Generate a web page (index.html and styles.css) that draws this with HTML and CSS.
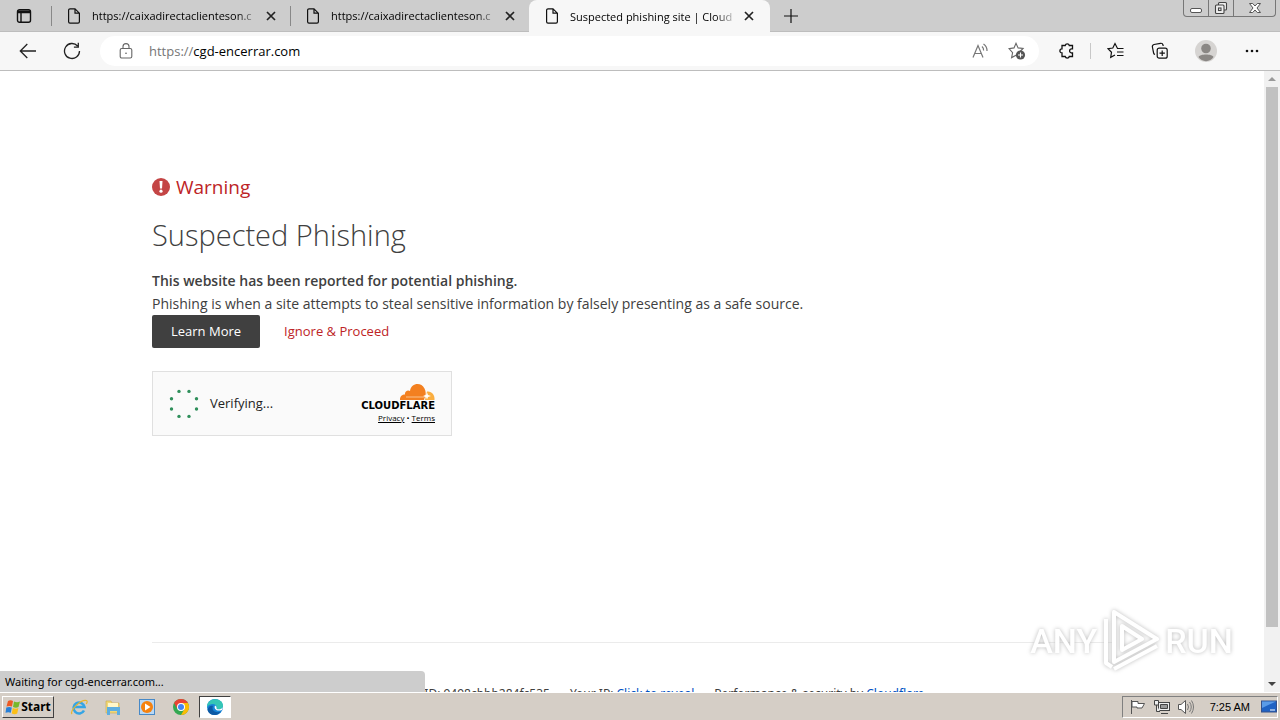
FILE: index.html
```html
<!DOCTYPE html>
<html lang="en">
<head>
    <meta charset="UTF-8">
    <meta name="viewport" content="width=device-width, initial-scale=1.0">
    <title>Suspected phishing site | Cloudflare</title>
    <link rel="stylesheet" href="styles.css">
</head>
<body>
    <div class="tab-strip">
        <button class="tab-menu" aria-label="Tab actions">
            <svg width="16" height="16" viewBox="0 0 16 16" fill="none" stroke="#111" stroke-width="1.4"><rect x="1.5" y="1.7" width="13" height="12.6" rx="2"/><path d="M2 3.3h12M2 4.6h12M5 5v9"/></svg>
        </button>
        <div class="tab">
            <svg width="14" height="16" viewBox="0 0 14 16" fill="none" stroke="#111" stroke-width="1.2"><path d="M3 .8h5l4.4 4.4v8.6a1.4 1.4 0 0 1-1.4 1.4H3a1.4 1.4 0 0 1-1.4-1.4V2.2A1.4 1.4 0 0 1 3 .8zM8 .8v4.4h4.4"/></svg>
            <span class="tab-title">https://caixadirectaclienteson.c</span>
            <button class="tab-close" aria-label="Close tab"><svg width="10" height="10" viewBox="0 0 10 10" stroke="#222" stroke-width="1.7"><path d="M1 1l8 8M9 1l-8 8"/></svg></button>
        </div>
        <div class="tab">
            <svg width="14" height="16" viewBox="0 0 14 16" fill="none" stroke="#111" stroke-width="1.2"><path d="M3 .8h5l4.4 4.4v8.6a1.4 1.4 0 0 1-1.4 1.4H3a1.4 1.4 0 0 1-1.4-1.4V2.2A1.4 1.4 0 0 1 3 .8zM8 .8v4.4h4.4"/></svg>
            <span class="tab-title">https://caixadirectaclienteson.c</span>
            <button class="tab-close" aria-label="Close tab"><svg width="10" height="10" viewBox="0 0 10 10" stroke="#222" stroke-width="1.7"><path d="M1 1l8 8M9 1l-8 8"/></svg></button>
        </div>
        <div class="tab active">
            <svg width="14" height="16" viewBox="0 0 14 16" fill="none" stroke="#111" stroke-width="1.2"><path d="M3 .8h5l4.4 4.4v8.6a1.4 1.4 0 0 1-1.4 1.4H3a1.4 1.4 0 0 1-1.4-1.4V2.2A1.4 1.4 0 0 1 3 .8zM8 .8v4.4h4.4"/></svg>
            <span class="tab-title">Suspected phishing site | Cloud</span>
            <button class="tab-close" aria-label="Close tab"><svg width="10" height="10" viewBox="0 0 10 10" stroke="#222" stroke-width="1.7"><path d="M1 1l8 8M9 1l-8 8"/></svg></button>
        </div>
        <button class="new-tab" aria-label="New tab"><svg width="14" height="14" viewBox="0 0 14 14" stroke="#111" stroke-width="1.2"><path d="M7 0v14M0 7h14"/></svg></button>
        <div class="window-buttons">
            <button aria-label="Minimize"><svg width="14" height="12" viewBox="0 0 14 12" fill="#fff" stroke="#555"><rect x="1.5" y="6.5" width="11" height="4" rx="1.5"/></svg></button>
            <button aria-label="Restore"><svg width="14" height="14" viewBox="0 0 14 14" fill="#eee" stroke="#444" stroke-width="1.1"><rect x="4.5" y="1.5" width="8" height="7.5" rx="1"/><rect x="1.5" y="4" width="8.5" height="8.5" rx="1"/><rect x="4.5" y="7" width="2.5" height="2.5"/></svg></button>
            <button class="close" aria-label="Close"><svg width="14" height="12" viewBox="0 0 14 12" fill="#fff" stroke="#555"><path d="M1.5 1.5h3.2L7 4l2.3-2.5h3.2L9 6l3.5 4.5H9.3L7 8l-2.3 2.5H1.5L5 6z"/></svg></button>
        </div>
    </div>

    <div class="toolbar">
        <button class="nav-button" aria-label="Back"><svg width="18" height="16" viewBox="0 0 18 16" fill="none" stroke="#222" stroke-width="1.3"><path d="M17 8H1.5M8.3 1L1.3 8l7 7"/></svg></button>
        <button class="nav-button" aria-label="Refresh"><svg width="18" height="18" viewBox="0 0 18 18" fill="none" stroke="#222" stroke-width="1.3"><path d="M16.5 9A7.5 7.5 0 1 1 14.6 4M15.3.8v4.4h-4.4"/></svg></button>
        <div class="address-bar">
            <svg width="14" height="16" viewBox="0 0 14 16" fill="none" stroke="#666" stroke-width="1.1"><rect x="1.2" y="5.5" width="11.6" height="9.5" rx="1.6"/><path d="M4 5.5V3.6a3 3 0 0 1 6 0v1.9"/><circle cx="7" cy="10.2" r=".8" fill="#555" stroke="none"/></svg>
            <div class="url"><span class="scheme">https://</span>cgd-encerrar.com</div>
            <button aria-label="Read aloud"><svg width="17" height="16" viewBox="0 0 17 16" fill="none" stroke="#777" stroke-width="1.2"><path d="M1 14.5l5-12 5 12M2.8 10.5h6.4M10 3.5a5 5 0 0 1 1.6 4M11.5 1a8 8 0 0 1 3.5 7"/></svg></button>
            <button aria-label="Add to favorites"><svg width="18" height="18" viewBox="0 0 18 18" fill="none" stroke="#666" stroke-width="1.1"><path d="M8.5 13l-4.9 2.6 1-5L1 6.6l5-.7L8 1.3l2.1 4.6 5 .6-3 3"/><circle cx="12.5" cy="13" r="4.6" fill="#555" stroke="none"/><path d="M12.5 10.5v5M10 13h5" stroke="#fff"/></svg></button>
        </div>
        <div class="actions">
            <button aria-label="Extensions"><svg width="18" height="18" viewBox="0 0 18 18" fill="none" stroke="#111" stroke-width="1.3"><path d="M4 3.5h3.2a2.1 2.1 0 0 1 4.1 0h3.2v3.3h-.8a2.1 2.1 0 0 0 0 4.2h.8v3.5h-3.2a2.1 2.1 0 0 1-4.1 0H4V11a2.1 2.1 0 0 1 0-4.2z"/></svg></button>
            <span class="divider"></span>
            <button class="favorites" aria-label="Favorites"><svg width="18" height="18" viewBox="0 0 18 18" fill="none" stroke="#111" stroke-width="1.2"><path d="M16.5 6.5h-6L8 1.5 5.8 6 1 6.7l3.5 3.6-.8 5L8 13M10 10h6.5M10 13.5h6.5"/></svg></button>
            <button aria-label="Collections"><svg width="18" height="18" viewBox="0 0 18 18" fill="none" stroke="#111" stroke-width="1.2"><rect x="6.2" y="6.2" width="10" height="10" rx="2"/><path d="M11.2 8.5v5.4M8.5 11.2h5.4M4 12.5A2 2 0 0 1 2.6 11L1.4 5A2.2 2.2 0 0 1 3 2.5l6.500-1.2A2.2 2.2 0 0 1 12 3l.2 1"/></svg></button>
            <button aria-label="Profile"><svg width="22" height="22" viewBox="0 0 22 22"><circle cx="11" cy="11" r="11" fill="#d6d4d2"/><circle cx="11" cy="8.5" r="4.8" fill="#8a8784"/><path d="M3.5 17c1-3.5 14-3.5 15 0-3 5.5-12 5.5-15 0z" fill="#8a8784"/></svg></button>
            <button aria-label="Settings and more"><svg width="14" height="4" viewBox="0 0 14 4" fill="#111"><circle cx="2" cy="2" r="1.3"/><circle cx="7" cy="2" r="1.3"/><circle cx="12" cy="2" r="1.3"/></svg></button>
        </div>
    </div>

    <div class="viewport">
        <div class="page">
            <main class="wrapper">
                <h2 class="warning">
                    <svg width="18" height="18" viewBox="0 0 18 18"><circle cx="9" cy="9" r="9" fill="#c44545"/><path d="M7.5 3h3l-.5 7.5H8z" fill="#fff"/><circle cx="9" cy="13.2" r="1.6" fill="#fff"/></svg>
                    Warning
                </h2>
                <h1>Suspected Phishing</h1>
                <p><strong>This website has been reported for potential phishing.</strong></p>
                <p>Phishing is when a site attempts to steal sensitive information by falsely presenting as a safe source.</p>
                <div class="choices">
                    <button class="learn-more">Learn More</button>
                    <button class="proceed">Ignore &amp; Proceed</button>
                </div>
                <div class="turnstile">
                    <svg width="30" height="30" viewBox="0 0 30 30" fill="#2f8f5b"><circle cx="10" cy="2.4" r="1.7"/><circle cx="20" cy="2.4" r="1.7"/><circle cx="27.5" cy="9.8" r="1.7"/><circle cx="27.5" cy="20" r="1.7"/><circle cx="20" cy="27.4" r="1.7"/><circle cx="10" cy="27.4" r="1.7"/><circle cx="2.5" cy="20" r="1.7"/><circle cx="2.5" cy="9.8" r="1.7"/></svg>
                    <span class="verifying">Verifying...</span>
                    <div class="brand">
                        <svg width="36" height="16" viewBox="0 0 36 16"><path d="M1 16c-.2-3.5 2-5.5 5-5.5C5.5 7 9 5.5 11 7 12-1 22-2.5 25.5 4.5c1 2 1.5 4 1 6.5L25 16z" fill="#f38020"/><path d="M26 16l2-8.5c4.5-.8 8 3.5 7.5 8.5z" fill="#faae40"/><path d="M7 13h18l1.5-2" fill="none" stroke="#fbd2a6" stroke-width=".8"/><path d="M28 8.5l1 2.5 3 1-3 1-1 2.5-1-2.5-3-1 3-1z" fill="#fff"/></svg>
                        <b class="brand-name">CLOUDFLARE</b>
                        <div class="legal"><a href="#">Privacy</a> • <a href="#">Terms</a></div>
                    </div>
                </div>
            </main>
            <footer class="wrapper footer">
                <span>Cloudflare Ray ID: 9498cbbb284fc535</span>
                <span>Your IP: <a href="#">Click to reveal</a></span>
                <span>Performance &amp; security by <a href="#">Cloudflare</a></span>
            </footer>
        </div>
        <div class="scrollbar">
            <span class="arrow up"></span>
            <span class="thumb"></span>
            <span class="arrow down"></span>
        </div>
        <div class="status">Waiting for cgd-encerrar.com...</div>
        <div class="watermark">
            <span>ANY</span>
            <svg width="58" height="64" viewBox="0 0 58 64" fill="none" stroke="#fff" stroke-width="4" stroke-linejoin="round"><path d="M4 10v44l6 4M12 3v50l43-23zM20 17v24l20-11zM12 60l43-23"/></svg>
            <span>RUN</span>
        </div>
    </div>

    <div class="taskbar">
        <button class="start">
            <svg width="16" height="16" viewBox="0 0 16 16"><path d="M3 2q2.5-1.5 5 0L7 7.5q-2.5-1.2-5.5 0z" fill="#ed5a24"/><path d="M9 2.5q3 1.5 6 0L13.5 8Q11 9.5 8 8z" fill="#77b82a"/><path d="M1.3 8.5q3-1.2 5.5 0l-1 5.3q-2.5-1.3-5.3 0z" fill="#2780d8"/><path d="M7.8 9q3 1.5 5.6 0l-1.2 5.5q-2.5 1.5-5.4 0z" fill="#fbbf16"/></svg>
            Start
        </button>
        <div class="launchers">
            <button aria-label="Internet Explorer"><svg width="18" height="18" viewBox="0 0 18 18" fill="none"><path d="M14 12.5A5.5 5.5 0 1 1 14.5 9H5" stroke="#35a5e5" stroke-width="2.6"/><path d="M2 16c-3-3 9-15 14.5-13.5 1 .3.8 2-.2 3.5" stroke="#e8b52c" stroke-width="1.2"/></svg></button>
            <button aria-label="Explorer"><svg width="18" height="18" viewBox="0 0 18 18"><path d="M2 3h5l1 2h7v10H2z" fill="#f0d778" stroke="#c9a94a" stroke-width=".6"/><path d="M4 5h10v4H4z" fill="#fff7c9"/><path d="M3 9h13v8h-3v-4H6v4H3z" fill="#5daee0"/></svg></button>
            <button aria-label="Media Player"><svg width="18" height="18" viewBox="0 0 18 18"><rect x="1.5" y="1.5" width="15" height="15" fill="#b9d8f5" stroke="#4789c7"/><circle cx="9" cy="9" r="6" fill="#f58210"/><path d="M7 5.5L12.5 9 7 12.5z" fill="#fff"/></svg></button>
            <button aria-label="Chrome"><svg width="18" height="18" viewBox="0 0 18 18"><circle cx="9" cy="9" r="8" fill="#33a852"/><path d="M2.07 5A8 8 0 0 1 15.93 5H9L5.5 11z" fill="#ea4335"/><path d="M15.93 5A8 8 0 0 1 9 17l3.5-6L9 5z" fill="#fbbc05"/><circle cx="9" cy="9" r="4" fill="#fff"/><circle cx="9" cy="9" r="3" fill="#4285f4"/></svg></button>
            <button class="running" aria-label="Edge"><svg width="18" height="18" viewBox="0 0 18 18"><circle cx="9" cy="9" r="8" fill="#1684d8"/><path d="M1 9C1-1 17-1 17 8c0 3-4 4.5-6.5 2.5C12 6 5 4 1 9z" fill="#35c6b6"/><path d="M7 8c-2 4 2 8 8 5.5C11 19 3 18 1.5 12 2.5 8 5 7 7 8z" fill="#0c59a4"/><path d="M9 7.5c-1.5 3 1.5 6.5 7 4.5l1-3c-1.5 2.5-5 3-6.5 1.5C11 9 10 7.8 9 7.5z" fill="#fff"/></svg></button>
        </div>
        <div class="tray">
            <svg width="18" height="16" viewBox="0 0 18 16" fill="#fff" stroke="#555"><path d="M2.5 1v14M3 2.5h6v2h6.5L13 9H8V8H3z"/></svg>
            <svg width="18" height="16" viewBox="0 0 18 16" fill="#eee" stroke="#444"><rect x="5.5" y="3.5" width="11" height="8"/><path d="M7.5 5.5h7v4h-7z" fill="#999"/><path d="M8 14.5h7M1.5 1.5h4V6h-4zM3.5 6v6.5H7"/></svg>
            <svg width="18" height="16" viewBox="0 0 18 16" fill="#fff" stroke="#555"><path d="M1.5 5.5H4L8.5 1.5v13L4 10.5H1.5z"/><path d="M10.5 5q2 3 0 6M12.5 3q3.5 5 0 10M14.5 1.5q4 6.5 0 13" fill="none" stroke="#777"/></svg>
            <span class="clock">7:25 AM</span>
            <svg width="16" height="14" viewBox="0 0 16 14"><rect x=".5" y="1" width="15" height="11" fill="#1f62c4" stroke="#35508a"/><path d="M1 1.5h14L1 8z" fill="#5a9be8"/><path d="M9 10h5" stroke="#fff"/></svg>
        </div>
    </div>
</body>
</html>
```
FILE: styles.css
```css
* {
    box-sizing: border-box;
}
body {
    margin: 0;
    height: 100vh;
    display: flex;
    flex-direction: column;
    overflow: hidden;
    font-family: "Open Sans", "Noto Sans", sans-serif;
    font-size: 13px;
    color: #000;
    background: #fff;
}
button {
    font: inherit;
    color: inherit;
    padding: 0;
    border: 0;
    background: none;
    display: flex;
    align-items: center;
    justify-content: center;
}
svg {
    flex: none;
    display: block;
}

/* tabs */
.tab-strip {
    display: flex;
    height: 32px;
    background: #cdcdcd;
    border-bottom: 1px solid #bdbdbd;
    font-size: 11px;
}
.tab-menu {
    width: 48px;
}
.tab {
    display: flex;
    align-items: center;
    width: 239px;
    padding: 0 11px 0 16px;
    margin-left: 3px;
    position: relative;
}
.tab + .tab {
    margin-left: 0;
}
.tab:not(.active)::before {
    content: "";
    position: absolute;
    left: 0;
    top: 6px;
    height: 20px;
    border-left: 1px solid #888;
}
.tab.active {
    width: 241px;
    height: 32px;
    padding-right: 13px;
    background: #f7f7f7;
    border-radius: 8px 8px 0 0;
}
.tab-title {
    flex: 1;
    margin: 0 6px 0 11px;
    white-space: nowrap;
    -webkit-mask-image: linear-gradient(to right, #000 88%, transparent 102%);
    mask-image: linear-gradient(to right, #000 88%, transparent 102%);
}
.tab-close {
    width: 16px;
    height: 20px;
}
.new-tab {
    width: 42px;
}
.window-buttons {
    display: flex;
    height: 17px;
    margin-left: auto;
    margin-right: 4px;
    border: 1px solid #777;
    border-top: 0;
    border-radius: 0 0 4px 4px;
}
.window-buttons button {
    width: 25px;
    border-right: 1px solid #777;
}
.window-buttons .close {
    width: 41px;
    border-right: 0;
}

/* toolbar */
.toolbar {
    display: flex;
    align-items: center;
    height: 39px;
    padding-left: 6px;
    background: #f7f7f7;
    border-bottom: 1px solid #bdbdbd;
}
.nav-button {
    width: 44px;
    height: 32px;
}
.address-bar {
    flex: 1;
    display: flex;
    align-items: center;
    height: 30px;
    margin-left: 6px;
    padding: 0 13px 0 19px;
    gap: 19px;
    border-radius: 15px;
    background: #fff;
}
.url {
    flex: 1;
    margin-left: -3px;
}
.scheme {
    color: #767676;
}
.actions {
    display: flex;
    align-items: center;
    margin-left: 5px;
    padding-right: 5px;
}
.actions button {
    width: 46px;
    height: 32px;
}
.actions .favorites {
    padding-left: 4px;
}
.divider {
    height: 16px;
    border-left: 1px solid #c8c8c8;
}

/* page */
.viewport {
    position: relative;
    flex: 1;
    min-height: 0;
    display: flex;
    overflow: hidden;
}
.page {
    flex: 1;
    overflow: hidden;
    display: flex;
    flex-direction: column;
    color: #404040;
    font-size: 14px;
    line-height: 23px;
}
.wrapper {
    width: 100%;
    max-width: 960px;
    margin: 0 auto;
}
main.wrapper {
    padding-top: 100px;
}
.warning {
    display: flex;
    align-items: center;
    gap: 6px;
    margin: 0;
    color: #bd2426;
    font-size: 19px;
    font-weight: 500;
    line-height: 32px;
}
h1 {
    margin: 11px 0 13px;
    font-size: 29px;
    font-weight: 300;
    line-height: 42px;
}
p {
    margin: 0;
}
strong {
    font-weight: 600;
}
.choices {
    display: flex;
    gap: 5px;
}
.choices button {
    height: 33px;
    padding: 0 19px;
    border-radius: 2px;
    font-size: 13px;
}
.choices .learn-more {
    background: #404040;
    color: #fff;
}
.choices .proceed {
    color: #bd2426;
}
.turnstile {
    display: flex;
    align-items: center;
    width: 300px;
    height: 65px;
    margin-top: 23px;
    padding: 0 16px;
    gap: 11px;
    background: #fafafa;
    border: 1px solid #e0e0e0;
}
.verifying {
    color: #232323;
    font-size: 13px;
}
.brand {
    display: flex;
    flex-direction: column;
    align-items: flex-end;
    margin-left: auto;
    color: #000;
}
.brand-name {
    font-family: "DejaVu Sans", sans-serif;
    font-size: 10px;
    line-height: 12px;
}
.legal {
    font-size: 8px;
    line-height: 12px;
}
.legal a {
    color: inherit;
}
.footer {
    display: flex;
    justify-content: center;
    gap: 20px;
    margin-top: 206px;
    padding-top: 39px;
    border-top: 1px solid #ebebeb;
    font-family: "Noto Sans", sans-serif;
    font-size: 12px;
    white-space: nowrap;
}
.footer a {
    color: #0051c3;
    text-decoration: none;
}

/* scrollbar */
.scrollbar {
    display: flex;
    flex-direction: column;
    align-items: center;
    width: 16px;
    background: #f1f1f1;
}
.arrow {
    height: 16px;
    display: flex;
    align-items: center;
}
.arrow::before {
    content: "";
    border: 4px solid transparent;
}
.up::before {
    border-top: 0;
    border-bottom-color: #999;
}
.down {
    margin-top: auto;
}
.down::before {
    border-bottom: 0;
    border-top-color: #444;
}
.thumb {
    width: 12px;
    height: 87%;
    background: #c1c1c1;
}

/* overlays */
.status {
    position: absolute;
    left: 0;
    bottom: 0;
    width: 425px;
    height: 21px;
    padding-left: 5px;
    line-height: 21px;
    font-family: "Noto Sans", sans-serif;
    font-size: 11px;
    background: #cdcdcd;
    border-radius: 0 4px 0 0;
}
.watermark {
    position: absolute;
    right: 47px;
    bottom: 19px;
    display: flex;
    align-items: center;
    gap: 5px;
    color: #fff;
    font-family: Roboto, sans-serif;
    font-size: 34px;
    font-weight: 500;
    line-height: 64px;
    filter: drop-shadow(0 0 2px #bbb);
}

/* taskbar */
.taskbar {
    display: flex;
    align-items: center;
    height: 28px;
    padding: 0 2px;
    background: #d5cec6;
    border-top: 1px solid #fff;
}
.start {
    width: 52px;
    height: 22px;
    border: 1px solid #fff;
    border-right-color: #404040;
    border-bottom-color: #404040;
    font-family: "Noto Sans", sans-serif;
    font-size: 12px;
    font-weight: bold;
}
.launchers {
    display: flex;
    gap: 2px;
    margin-left: 9px;
}
.launchers button {
    width: 32px;
    height: 22px;
}
.launchers .running {
    background: #fff;
    border: 1px solid #404040;
    border-right-color: #fff;
    border-bottom-color: #fff;
}
.tray {
    display: flex;
    align-items: center;
    gap: 6px;
    height: 22px;
    margin-left: auto;
    padding: 0 0 0 6px;
    border: 1px solid #808080;
    border-right-color: #fff;
    border-bottom-color: #fff;
}
.clock {
    margin: 0 5px 0 9px;
    font-family: "Liberation Sans", sans-serif;
    font-size: 11px;
}
```
